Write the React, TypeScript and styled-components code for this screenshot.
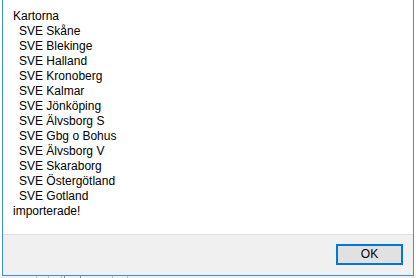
import styled, { createGlobalStyle } from "styled-components";

const regions = [
  "Skåne",
  "Blekinge",
  "Halland",
  "Kronoberg",
  "Kalmar",
  "Jönköping",
  "Älvsborg S",
  "Gbg o Bohus",
  "Älvsborg V",
  "Skaraborg",
  "Östergötland",
  "Gotland"
];

const GlobalStyle = createGlobalStyle`
  html, body {
    margin: 0;
    padding: 0;
    background: #ffffff;
    overflow: hidden;
  }
`;

const Screen = styled.div`
  width: 416px;
  height: 278px;
  display: flex;
  flex-direction: column;
  background: #ffffff;
  font-family: "Segoe UI", "Liberation Sans", Arial, sans-serif;
`;

const Dialog = styled.div`
  margin: 0 2px;
  height: 275px;
  display: flex;
  flex-direction: column;
  border: 1px solid #3d8ee6;
  border-top: 0;
  background: #ffffff;
`;

const Message = styled.div`
  height: 234px;
  box-sizing: border-box;
  padding: 9px 0 0 10px;
  color: #000000;
  font-size: 12px;
  line-height: 15px;
`;

const Line = styled.div<{ $indent?: boolean }>`
  padding-left: ${({ $indent }) => ($indent ? "6px" : "0")};
  white-space: nowrap;
`;

const Footer = styled.div`
  flex: 1;
  display: flex;
  justify-content: flex-end;
  align-items: flex-start;
  padding: 9px 10px 0 0;
  border-top: 1px solid #dfdfdf;
  background: #f0f0f0;
`;

const OkButton = styled.button`
  width: 67px;
  height: 21px;
  box-sizing: border-box;
  padding: 0;
  border: 2px solid #0078d7;
  background: #e1e1e1;
  color: #000000;
  font-family: inherit;
  font-size: 12px;
  line-height: 15px;
`;

const Behind = styled.div`
  flex: 1;
  display: flex;
  background: #f0f0f0;
`;

const BehindMark = styled.span<{ $w: number; $dark?: boolean }>`
  width: ${({ $w }) => $w}px;
  border-right: 1px solid ${({ $dark }) => ($dark ? "#9a9a9a" : "#c8c8c8")};
`;

export default function App() {
  return (
    <>
      <GlobalStyle />
      <Screen>
        <Dialog>
          <Message>
            <Line>Kartorna</Line>
            {regions.map((r) => (
              <Line key={r} $indent>
                SVE {r}
              </Line>
            ))}
            <Line>importerade!</Line>
          </Message>
          <Footer>
            <OkButton type="button">OK</OkButton>
          </Footer>
        </Dialog>
        <Behind>
          <BehindMark $w={36} />
          <BehindMark $w={11} />
          <BehindMark $w={12} />
          <BehindMark $w={2} $dark />
          <BehindMark $w={15} $dark />
          <BehindMark $w={31} />
          <BehindMark $w={14} />
        </Behind>
      </Screen>
    </>
  );
}
